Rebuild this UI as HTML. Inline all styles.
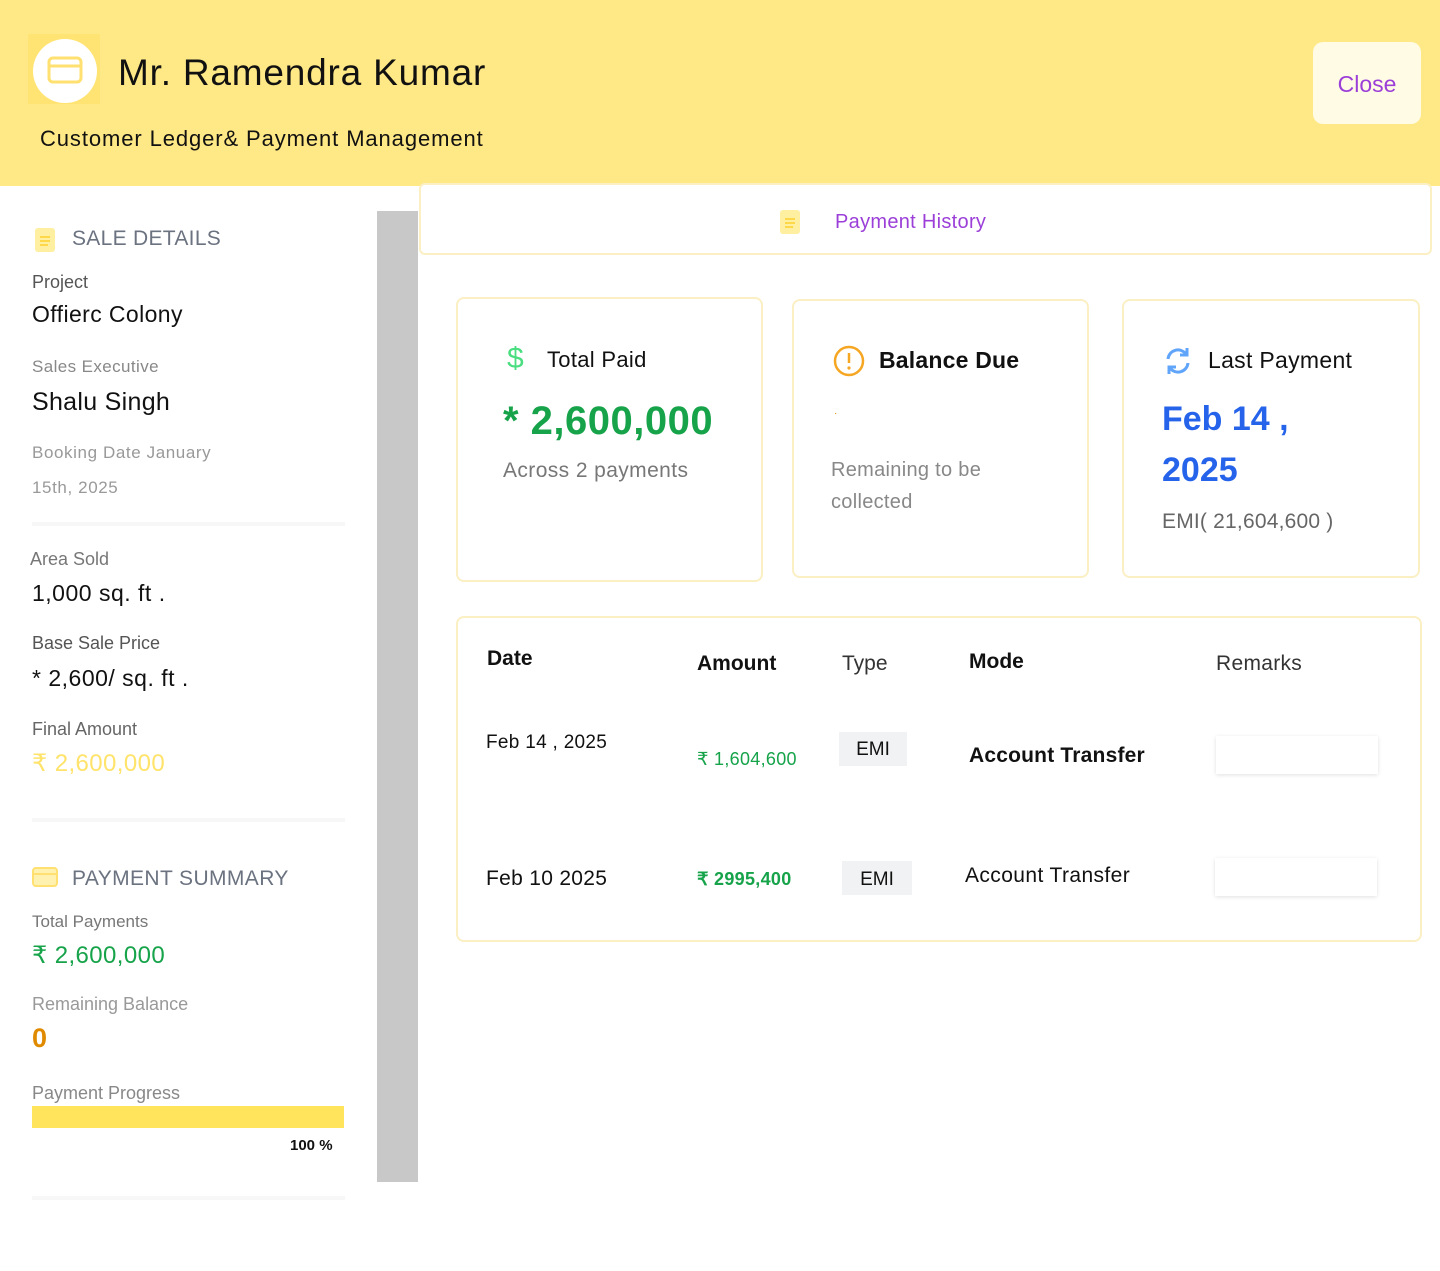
<!DOCTYPE html>
<html><head><meta charset="utf-8"><style>
*{margin:0;padding:0;box-sizing:border-box}
body{width:1440px;height:1271px;background:#fff;font-family:"Liberation Sans",sans-serif;position:relative;overflow:hidden;color:#111}
.a{position:absolute;white-space:nowrap}
.card{position:absolute;border:2px solid #fbefc4;border-radius:8px;background:#fff}
.lbl{color:#6b7280;font-size:18px}
.sep{position:absolute;left:32px;width:313px;height:4px;background:#f7f7f7}
</style></head><body>
<div class="a" style="left:0;top:0;width:1440px;height:186px;background:#ffe986"></div>
<div class="a" style="left:28px;top:34px;width:72px;height:70px;background:#ffe474"></div>
<div class="a" style="left:33px;top:39px;width:64px;height:64px;border-radius:50%;background:#fff"></div>
<svg class="a" style="left:47px;top:56px" width="36" height="28" viewBox="0 0 36 28"><rect x="2" y="2" width="32" height="24" rx="4" fill="none" stroke="#ffe070" stroke-width="3"/><line x1="2" y1="10" x2="34" y2="10" stroke="#ffe070" stroke-width="3"/></svg>
<div class="a" style="left:118px;top:52px;font-size:37px;letter-spacing:0.8px">Mr. Ramendra Kumar</div>
<div class="a" style="left:40px;top:126px;font-size:22px;letter-spacing:0.9px">Customer Ledger&amp; Payment Management</div>
<div class="a" style="left:1313px;top:42px;width:108px;height:82px;background:#fffbe5;border-radius:10px;color:#9b3fd8;font-size:23px;text-align:center;line-height:84px">Close</div>

<svg class="a" style="left:34px;top:227px" width="22" height="26"><rect x="1" y="1" width="20" height="24" rx="3" fill="#ffefa0"/><path d="M6 10h10M6 14h10M6 18h8" stroke="#ffd84a" stroke-width="2"/></svg>
<div class="a" style="left:72px;top:227px;font-size:21px;color:#6b7280;letter-spacing:0.3px">SALE DETAILS</div>
<div class="a lbl" style="left:32px;top:272px;color:#555">Project</div>
<div class="a" style="left:32px;top:301px;font-size:23px;letter-spacing:0.4px">Offierc Colony</div>
<div class="a lbl" style="left:32px;top:357px;font-size:17px;color:#888;letter-spacing:0.4px">Sales Executive</div>
<div class="a" style="left:32px;top:388px;font-size:25px;letter-spacing:0.3px">Shalu Singh</div>
<div class="a lbl" style="left:32px;top:443px;font-size:17px;color:#999;letter-spacing:0.6px">Booking Date January</div>
<div class="a lbl" style="left:32px;top:478px;font-size:17px;color:#999;letter-spacing:0.6px">15th, 2025</div>
<div class="sep" style="top:522px"></div>
<div class="a lbl" style="left:30px;top:549px;color:#777">Area Sold</div>
<div class="a" style="left:32px;top:580px;font-size:23px;letter-spacing:0.5px">1,000 sq. ft .</div>
<div class="a lbl" style="left:32px;top:633px;color:#555">Base Sale Price</div>
<div class="a" style="left:32px;top:665px;font-size:23px;letter-spacing:0.5px">* 2,600/ sq. ft .</div>
<div class="a lbl" style="left:32px;top:719px;color:#666">Final Amount</div>
<div class="a" style="left:32px;top:749px;font-size:24px;color:#ffe36b;letter-spacing:0.4px">₹ 2,600,000</div>
<div class="sep" style="top:818px"></div>
<svg class="a" style="left:32px;top:867px" width="26" height="20"><rect x="1" y="1" width="24" height="18" rx="3" fill="#fff2b0" stroke="#ffe070" stroke-width="2"/><line x1="1" y1="7" x2="25" y2="7" stroke="#ffe070" stroke-width="2"/></svg>
<div class="a" style="left:72px;top:867px;font-size:21px;color:#6b7280;letter-spacing:0.4px">PAYMENT SUMMARY</div>
<div class="a lbl" style="left:32px;top:912px;font-size:17px;color:#777">Total Payments</div>
<div class="a" style="left:32px;top:941px;font-size:24px;color:#16a34a;letter-spacing:0.4px">₹ 2,600,000</div>
<div class="a lbl" style="left:32px;top:994px;color:#999">Remaining Balance</div>
<div class="a" style="left:32px;top:1023px;font-size:27px;color:#e08a00;font-weight:bold">0</div>
<div class="a lbl" style="left:32px;top:1083px;color:#888">Payment Progress</div>
<div class="a" style="left:32px;top:1106px;width:312px;height:22px;background:#ffe45c"></div>
<div class="a" style="left:290px;top:1137px;font-size:15px;font-weight:bold">100 %</div>
<div class="sep" style="top:1196px"></div>

<div class="a" style="left:377px;top:211px;width:41px;height:971px;background:#c8c8c8"></div>
<div class="a" style="left:419px;top:183px;width:1013px;height:72px;border:2px solid #fbefc4;border-radius:6px;background:#fff"></div>
<svg class="a" style="left:779px;top:209px" width="22" height="26"><rect x="1" y="1" width="20" height="24" rx="3" fill="#ffefa0"/><path d="M6 10h10M6 14h10M6 18h8" stroke="#ffd84a" stroke-width="2"/></svg>
<div class="a" style="left:835px;top:211px;font-size:20px;color:#9b3fd8;letter-spacing:0.3px">Payment History</div>

<div class="card" style="left:456px;top:297px;width:307px;height:285px"></div>
<div class="a" style="left:507px;top:342px;font-size:30px;color:#4ade80">$</div>
<div class="a" style="left:547px;top:347px;font-size:22px;letter-spacing:0.3px">Total Paid</div>
<div class="a" style="left:503px;top:399px;font-size:40px;color:#16a34a;font-weight:bold;letter-spacing:0.5px">* 2,600,000</div>
<div class="a" style="left:503px;top:459px;font-size:21px;color:#777;letter-spacing:0.4px">Across 2 payments</div>

<div class="card" style="left:792px;top:299px;width:297px;height:279px"></div>
<svg class="a" style="left:833px;top:345px" width="32" height="32"><circle cx="16" cy="16" r="14" fill="none" stroke="#f5a623" stroke-width="2.5"/><line x1="16" y1="8" x2="16" y2="18" stroke="#f5a623" stroke-width="2.5"/><circle cx="16" cy="23" r="1.6" fill="#f5a623"/></svg>
<div class="a" style="left:879px;top:347px;font-size:23px;font-weight:bold;letter-spacing:0.2px">Balance Due</div>
<div class="a" style="left:834px;top:408px;font-size:10px;color:#e08a00">·</div>
<div class="a" style="left:831px;top:459px;font-size:20px;color:#888;letter-spacing:0.3px">Remaining to be</div>
<div class="a" style="left:831px;top:491px;font-size:20px;color:#888;letter-spacing:0.3px">collected</div>

<div class="card" style="left:1122px;top:299px;width:298px;height:279px"></div>
<svg class="a" style="left:1162px;top:345px" width="32" height="32" viewBox="0 0 32 32"><path d="M6 14a10 10 0 0 1 18-5M26 18a10 10 0 0 1-18 5" fill="none" stroke="#60a5fa" stroke-width="3"/><path d="M25 3v7h-7M7 29v-7h7" fill="none" stroke="#60a5fa" stroke-width="3"/></svg>
<div class="a" style="left:1208px;top:347px;font-size:23px;letter-spacing:0.3px">Last Payment</div>
<div class="a" style="left:1162px;top:400px;font-size:34px;color:#2563eb;font-weight:bold">Feb 14 ,</div>
<div class="a" style="left:1162px;top:451px;font-size:34px;color:#2563eb;font-weight:bold">2025</div>
<div class="a" style="left:1162px;top:510px;font-size:21px;color:#666;letter-spacing:0.2px">EMI( 21,604,600 )</div>

<div class="card" style="left:456px;top:616px;width:966px;height:326px"></div>
<div class="a" style="left:487px;top:647px;font-size:21px;font-weight:bold">Date</div>
<div class="a" style="left:697px;top:652px;font-size:21px;font-weight:bold">Amount</div>
<div class="a" style="left:842px;top:652px;font-size:21px;color:#333">Type</div>
<div class="a" style="left:969px;top:650px;font-size:21px;font-weight:bold">Mode</div>
<div class="a" style="left:1216px;top:652px;font-size:21px;color:#333;letter-spacing:0.3px">Remarks</div>
<div class="a" style="left:486px;top:732px;font-size:19px;letter-spacing:0.3px">Feb 14 , 2025</div>
<div class="a" style="left:697px;top:749px;font-size:18px;color:#16a34a;letter-spacing:0.3px">₹ 1,604,600</div>
<div class="a" style="left:839px;top:732px;width:68px;height:34px;background:#f1f2f4;font-size:19px;text-align:center;line-height:36px">EMI</div>
<div class="a" style="left:969px;top:744px;font-size:21px;font-weight:bold;letter-spacing:0.2px">Account Transfer</div>
<div class="a" style="left:1216px;top:736px;width:162px;height:38px;background:#fff;box-shadow:0 1px 4px rgba(0,0,0,.12)"></div>
<div class="a" style="left:486px;top:867px;font-size:21px;letter-spacing:0.3px">Feb 10 2025</div>
<div class="a" style="left:697px;top:869px;font-size:18px;color:#16a34a;font-weight:bold;letter-spacing:0.3px">₹ 2995,400</div>
<div class="a" style="left:842px;top:861px;width:70px;height:34px;background:#f1f2f4;font-size:19px;text-align:center;line-height:38px">EMI</div>
<div class="a" style="left:965px;top:864px;font-size:21px;letter-spacing:0.4px">Account Transfer</div>
<div class="a" style="left:1215px;top:858px;width:162px;height:38px;background:#fff;box-shadow:0 1px 4px rgba(0,0,0,.12)"></div>
</body></html>
